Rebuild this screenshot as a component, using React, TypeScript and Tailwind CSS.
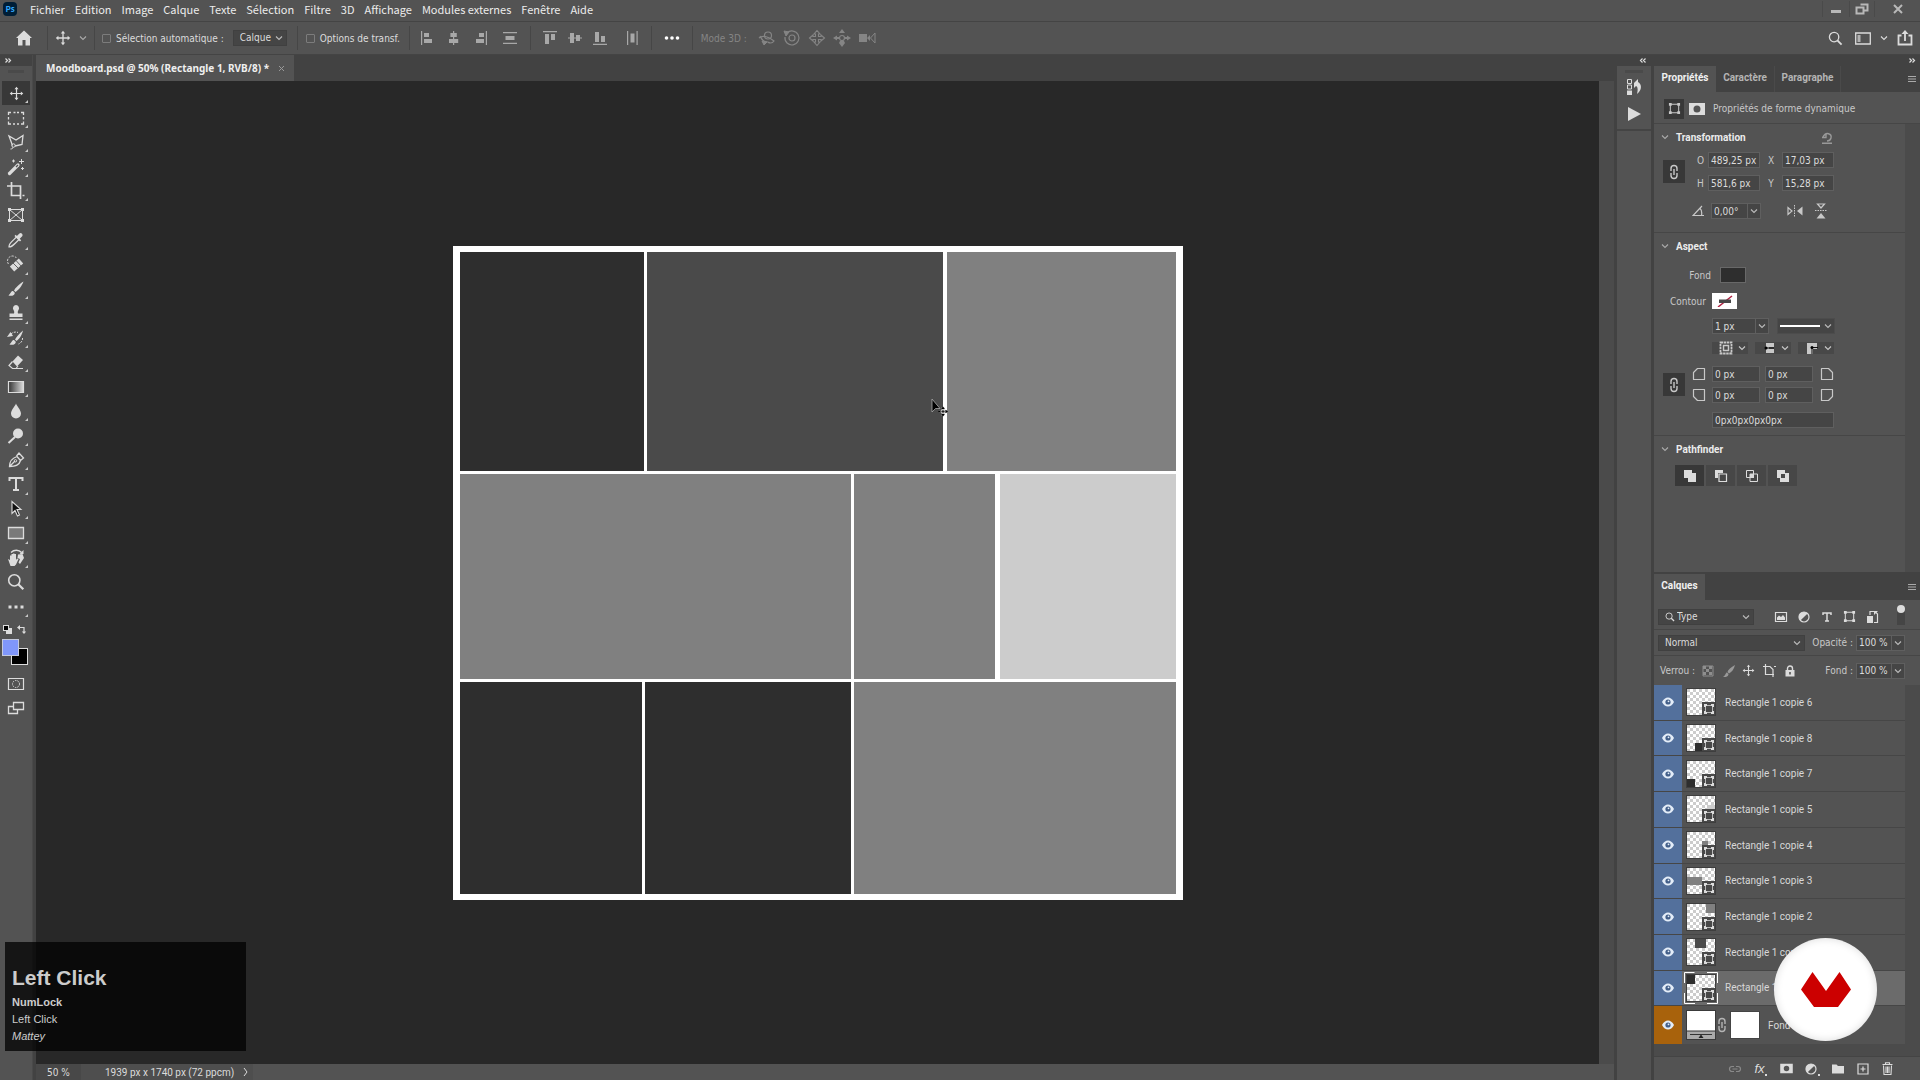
import type { ReactNode } from "react";

const L = "#dcdcdc";

function Svg({ s = 18, w, children, className = "" }: { s?: number; w?: number; children: ReactNode; className?: string }) {
  return (
    <svg width={w ?? s} height={s} viewBox={`0 0 ${w ?? s} ${s}`} fill="none" stroke="currentColor" className={`shrink-0 ${className}`} aria-hidden="true">
      {children}
    </svg>
  );
}

const Chevron = ({ className = "" }: { className?: string }) => (
  <Svg s={8} className={className}>
    <path d="M1 2.5 4 5.5 7 2.5" strokeWidth="1.1" />
  </Svg>
);

const MoveIcon = ({ s = 16 }: { s?: number }) => (
  <svg width={s} height={s} viewBox="0 0 16 16" fill="currentColor" stroke="currentColor" className="shrink-0" aria-hidden="true">
    <path d="M8 2v12M2 8h12" strokeWidth="1.3" />
    <path d="M8 .8 10.2 3.4H5.8zM8 15.2l2.2-2.6H5.8zM.8 8l2.6-2.2v4.4zM15.2 8l-2.6-2.2v4.4z" stroke="none" />
  </svg>
);

const ShapeIcon = ({ s = 14 }: { s?: number }) => (
  <svg width={s} height={s} viewBox="0 0 14 14" fill="none" stroke="currentColor" className="shrink-0" aria-hidden="true">
    <path d="M2.5 2.5h9v9h-9z" strokeWidth="1.1" />
    <path d="M1 1h3v3H1zM10 1h3v3h-3zM1 10h3v3H1zM10 10h3v3h-3z" fill="currentColor" stroke="none" />
  </svg>
);

const LinkIcon = () => (
  <Svg s={16} w={10}>
    <path d="M2 7V4.500a3 3 0 0 1 6 0V7M2 9v2.500a3 3 0 0 0 6 0V9M5 5v6" strokeWidth="1.4" />
  </Svg>
);

const MaskIcon = ({ s = 14 }: { s?: number }) => (
  <svg width={s + 2} height={s} viewBox="0 0 16 14" className="shrink-0" aria-hidden="true">
    <path fill="currentColor" fillRule="evenodd" d="M0 1h16v12H0zM8 3.500a3.500 3.500 0 1 0 0 7a3.500 3.500 0 0 0 0-7" />
  </svg>
);

const SearchIcon = ({ s = 16 }: { s?: number }) => (
  <svg width={s} height={s} viewBox="0 0 16 16" fill="none" stroke="currentColor" className="shrink-0" aria-hidden="true">
    <circle cx="6.500" cy="6.500" r="5" strokeWidth="1.4" />
    <path d="m10 10 4.500 4.500" strokeWidth="2" />
  </svg>
);

const AdjustIcon = () => (
  <Svg s={14}>
    <circle cx="7" cy="7" r="5" strokeWidth="1.2" />
    <path d="M10.600 3.400A5 5 0 0 0 3.400 10.600z" fill="currentColor" stroke="none" />
  </Svg>
);

const tools: { name: string; icon: ReactNode; active?: boolean; plain?: boolean }[] = [
  { name: "Déplacement", active: true, icon: <MoveIcon s={15} /> },
  { name: "Rectangle de sélection", icon: <Svg><path d="M1.500 6V3.500H4M6.500 3.500h2M10 3.500h2M14 3.500h2.500V6M16.500 8v2.500M16.500 12.500V15H14M12 15h-2M8 15H6M4 15H1.500v-2.500M1.500 10.500V8" strokeWidth="1.3" /></Svg> },
  { name: "Lasso polygonal", icon: <Svg><path d="M5.500 12.500 2 3l7 4 7-4.500-1 9-7 1.500" strokeWidth="1.300" /><circle cx="6.500" cy="12.500" r="1.700" /><path d="M6 14c0 1.500-1 2-2.500 2" /></Svg> },
  { name: "Baguette magique", icon: <Svg><path d="M2.500 15.500 11 7" strokeWidth="3.200" strokeLinecap="round" /><path d="m9 9 2-2" stroke="#535353" strokeWidth="1.200" /><path d="M14.500 1v5M12 3.500h5M6.500 1.500v3M5 3h3M15.500 9v3M14 10.500h3" /></Svg> },
  { name: "Recadrage", icon: <Svg><path d="M4.500 0v13.500H14M0 4h13.500v13M15.500 13.500h2" strokeWidth="1.700" /></Svg> },
  { name: "Image", plain: true, icon: <Svg><path d="M2.500 3.500h13v11h-13zM2.500 3.500l13 11M15.500 3.500l-13 11" /><path d="M1 2h3v3H1zM14 2h3v3h-3zM1 13h3v3H1zM14 13h3v3h-3z" fill="currentColor" stroke="none" /></Svg> },
  { name: "Pipette", icon: <Svg><path d="M2 16c0-3 1-3.500 7.500-10L12 8.500C6 14.500 5 16 2 16z" strokeWidth="1.200" /><path d="m7.500 5 5.500 5.500 1.200-1.200-1.500-1.500 2.500-2.500a2 2 0 0 0-2.800-2.800L9.900 5 8.700 3.800z" fill="currentColor" stroke="none" /></Svg> },
  { name: "Correcteur", icon: <Svg><path d="M1.500 9a5 5 0 0 1 8-6" strokeDasharray="2 1.300" /><path d="M5 14 14 6" strokeWidth="6.500" /><path d="m6 8 6 6M9 5.500l6 6.500" stroke="#535353" strokeWidth=".9" /></Svg> },
  { name: "Pinceau", icon: <Svg><path d="M16.500 1.500C12 4 8 8.500 7 10.500L8.500 12C11 10.500 15 6 16.500 1.500zM6 11c-2 0-2 2-4.500 4.500C5 16.500 8 15 7.800 12.700z" fill="currentColor" stroke="none" /></Svg> },
  { name: "Tampon", icon: <Svg><path d="M9 1a3.200 3.200 0 0 1 2.500 5c-1 1.500-.8 2.500-.5 3.500h4.500V13h-13V9.500H7c.3-1 .5-2-.5-3.500A3.200 3.200 0 0 1 9 1zM2.500 14.500h13V16h-13z" fill="currentColor" stroke="none" /></Svg> },
  { name: "Forme d'historique", icon: <Svg><path d="M16 1.500C12 4.500 9 8.500 8 10.500L9.500 12C12 10.500 15 6 16 1.500zM7 11c-2 0-2 2-4.500 4.500C6 16.500 9 15 8.800 12.700zM0 8l3.500-5L6 7z" fill="currentColor" stroke="none" /><path d="M4 5c2-2 5-2.500 7-1.500M15.500 9a6 6 0 0 1-4 6" strokeDasharray="2 1.200" /></Svg> },
  { name: "Gomme", icon: <Svg><path d="m5.500 8.500 5.500-6 5 4.500-6 6.500z" fill="currentColor" stroke="none" /><path d="M5.500 8.500 2 12.500l3.500 3H9l2-2.500M8 15.500h8" strokeWidth="1.200" /></Svg> },
  { name: "Dégradé", icon: <Svg><defs><linearGradient id="tool-gradient"><stop stopColor="#333" /><stop offset="1" stopColor="#ddd" /></linearGradient></defs><path d="M1.500 3.500h15v11h-15z" fill="url(#tool-gradient)" strokeWidth="1.200" /></Svg> },
  { name: "Goutte d'eau", icon: <Svg><path d="M9 1.500c1 3 5 6.500 5 10a5 5 0 0 1-10 0c0-3.500 4-7 5-10z" fill="currentColor" stroke="none" /></Svg> },
  { name: "Densité", icon: <Svg><circle cx="11" cy="6.500" r="5" fill="currentColor" stroke="none" /><path d="M8 10 1.500 16" strokeWidth="2" /></Svg> },
  { name: "Plume", icon: <Svg><path d="M2.500 15.500c0-6 3-8.500 7.500-10l3.500 4c-1 4-5 6-11 6zM3 15l5-5M9.500 5l2.500-3 4.500 5-3 2.500" strokeWidth="1.300" /><circle cx="8.500" cy="9.800" r="1.200" /></Svg> },
  { name: "Texte", icon: <Svg><path d="M2.500 6V3h13v3M9 3v12M6 15h6" strokeWidth="2" /></Svg> },
  { name: "Sélection de tracé", icon: <Svg><path d="M5 1.500v12l3-3 2.500 5.500 2-1-2.500-5.500h4z" fill="#111" strokeWidth="1.100" /></Svg> },
  { name: "Rectangle", icon: <Svg><path d="M1.500 3.500h15v11h-15z" fill="#7a7a7a" strokeWidth="1.300" /></Svg> },
  { name: "Main", icon: <Svg><path d="M1 10l2 1V6.500h1.500V5H6v-.5h1.500V5H9v6l1-1.500 1.500.5L9 15.500 7.500 17h-4zM11 5.500l4.500-.5 1.500 4-4 6-1.500-1.500L13 10l-2.500-1z" fill="currentColor" stroke="none" /><path d="M4 3.500C7 .5 12 .5 14.500 3.500" strokeWidth="1.400" /><path d="M16.500 1v4h-4z" fill="currentColor" stroke="none" /></Svg> },
  { name: "Zoom", plain: true, icon: <SearchIcon s={18} /> },
  { name: "Modifier la barre d'outils", icon: <Svg><path d="M1.500 7.500h3v3h-3zM7.500 7.500h3v3h-3zM13.500 7.500h3v3h-3z" fill="currentColor" stroke="none" /></Svg> },
];

function ToolBar() {
  return (
    <aside className="flex w-[33px] shrink-0 flex-col border-r border-[#4a4a4a] bg-[#535353] text-[#dcdcdc]" aria-label="Outils">
      <div className="h-[11px] bg-[#424242] pl-1"><DoubleArrow /></div>
      <div className="mx-auto mt-1 h-[3px] w-4 bg-[#4a4a4a]" />
      <div className="mt-2 flex h-[538px] flex-col">
        {tools.map((t) => (
          <button key={t.name} aria-label={t.name} className={`relative mx-0.5 flex min-h-0 flex-1 items-center justify-center ${t.active ? "bg-[#383838]" : ""}`}>
            {t.icon}
            {!t.plain && <span className="absolute right-0.5 bottom-0.5 border-b-[3px] border-l-[3px] border-b-[#c8c8c8] border-l-transparent" />}
          </button>
        ))}
      </div>
      <div className="mt-0.5 flex h-4 items-center justify-around pr-1">
        <svg width="9" height="9" aria-hidden="true"><rect x="3" y="3" width="6" height="6" fill={L} /><rect x=".5" y=".5" width="5" height="5" fill="#000" stroke={L} /></svg>
        <Svg s={9}><path d="M2 2.500h5V8" strokeWidth="1.200" /><path d="M0 2.500 3 0v5zM7 9 4.800 6.500h4.400z" fill="currentColor" stroke="none" /></Svg>
      </div>
      <div className="mt-0.5 ml-0.5 h-7 w-7">
        <button aria-label="Couleur d'arrière-plan" className="mt-[9px] ml-[9px] block h-[17px] w-[17px] border border-[#dcdcdc] bg-black" />
        <button aria-label="Couleur de premier plan" className="relative -top-[26px] block h-[17px] w-[17px] border border-[#c4c9dc] bg-[#8097fb]" />
      </div>
      <button aria-label="Mode masque" className="mt-2 flex justify-center"><Svg><path d="M1.500 3.500h15v11h-15z" strokeWidth="1.200" /><circle cx="9" cy="9" r="3.500" strokeDasharray="1.500 1" /></Svg></button>
      <button aria-label="Mode d'écran" className="mt-1.5 flex justify-center"><Svg><path d="M6.500 3.500h10v7h-10z" strokeWidth="1.300" /><path d="M6 7.500H1.500v7h9v-4" strokeWidth="1.300" /></Svg></button>
    </aside>
  );
}

const DoubleArrow = ({ left = false }: { left?: boolean }) => (
  <Svg s={11} w={8}>
    <path d={left ? "M3.500 3.500 1.500 5.500 3.500 7.500M6.500 3.500 4.500 5.500 6.500 7.500" : "M1.500 3.500 3.500 5.500 1.500 7.500M4.500 3.500 6.500 5.500 4.500 7.500"} stroke={L} strokeWidth="1.200" />
  </Svg>
);

const menus = ["Fichier", "Edition", "Image", "Calque", "Texte", "Sélection", "Filtre", "3D", "Affichage", "Modules externes", "Fenêtre", "Aide"];

function MenuBar() {
  return (
    <header className="flex h-[22px] shrink-0 items-center border-b border-[#444] bg-[#535353] pb-[3px] pl-[3px] font-['Noto_Sans_CJK_SC',sans-serif] text-[11px] text-[#ececec]">
      <div className="flex h-3.5 w-3.5 items-center justify-center rounded-sm bg-[#001e36] text-[8px] font-bold text-[#31a8ff]">Ps</div>
      <nav className="ml-[13px] flex gap-2.5">
        {menus.map((m) => <button key={m} className="leading-4">{m}</button>)}
      </nav>
      <div className="ml-auto flex h-full items-center text-[#b8b8b8]">
        <button aria-label="Réduire" className="flex h-4 w-[27px] items-center justify-center border-l border-[#4a4a4a]"><span className="mt-1 h-[3px] w-2.5 bg-current" /></button>
        <button aria-label="Restaurer" className="flex h-4 w-[25px] items-center justify-center border-l border-[#4a4a4a]"><Svg s={12} w={14}><path d="M5.500 1.500h7v6h-3M1.500 4.500h7v6h-7z" strokeWidth="2" /></Svg></button>
        <button aria-label="Fermer" className="flex h-4 w-[46px] items-center justify-center border-l border-[#4a4a4a]"><Svg s={10}><path d="m1 1 8 8M9 1 1 9" strokeWidth="2" /></Svg></button>
      </div>
    </header>
  );
}

const Sep = () => <span className="h-6 w-px shrink-0 bg-[#464646]" />;

const alignH = [
  { n: "Aligner à gauche", d: "M1 2h1.200v14H1zM4 4h5v4H4zM4 10h8v4H4z" },
  { n: "Centrer horizontalement", d: "M5.400 4h2.600V2h1.200v2h2.600v4H9.200v2h4v4h-4v2H8v-2H4v-4h4V8H5.400z" },
  { n: "Aligner à droite", d: "M15.800 2H17v14h-1.200zM9 4h5v4H9zM6 10h8v4H6z" },
];
const alignV = [
  { n: "Aligner en haut", d: "M2 2h14v1.200H2zM4 5h4v10H4zM10 5h4v6h-4z" },
  { n: "Centrer verticalement", d: "M4 4h4v4.400h2V6h4v2.400h2v1.200h-2V12h-4V9.600H8V14H4V9.600H2V8.400h2z" },
  { n: "Aligner en bas", d: "M2 14.800h14V16H2zM4 3h4v10H4zM10 7h4v6h-4z" },
];

function AlignGroup({ items }: { items: { n: string; d: string }[] }) {
  return (
    <>
      {items.map((i) => (
        <button key={i.n} aria-label={i.n} className="flex w-[25px] justify-center">
          <Svg><path d={i.d} fill="currentColor" stroke="none" /></Svg>
        </button>
      ))}
    </>
  );
}

const modes3d = [
  { n: "Orbite 3D", i: <Svg><path d="M1 9c3-3 9-2 15 3-2 3-5 2-6 1M2 7c2 5 6 6 8 6" strokeWidth="1.200" /><circle cx="10" cy="6.500" r="3.500" strokeWidth="1.200" /><path d="m4 12 5 1-3 3z" fill="currentColor" /></Svg> },
  { n: "Roulement 3D", i: <Svg><circle cx="9" cy="9" r="3" strokeWidth="1.200" /><path d="M4 4a7 7 0 1 1-2 4" strokeWidth="1.200" /><path d="m1 2 5 1-3 4z" fill="currentColor" /></Svg> },
  { n: "Panoramique 3D", i: <Svg><path d="M7.500 7.500V5H6l3-3.500L12 5h-1.500v2.500H13V6l3.500 3-3.500 3v-1.500h-2.500V13H12l-3 3.500L6 13h1.500v-2.500H5V12L1.500 9 5 6v1.500z" strokeWidth="1.100" /></Svg> },
  { n: "Glissement 3D", i: <Svg><circle cx="9" cy="9" r="2.500" strokeWidth="1.200" /><path d="M9 0l3 4H6zM9 18l3-4-1-2H7l-1 2zM0 9l4-2.500v1.500h2v2H4v1.500zM18 9l-4-2.500V8h-2v2h2v1.500z" fill="currentColor" stroke="none" /></Svg> },
  { n: "Caméra 3D", i: <Svg><path d="M1 5h8v8H1zM9 9l3-3v6z" fill="currentColor" stroke="none" /><path d="M17 4l-4.500 5 4.500 5z" /></Svg> },
];

function OptionsBar() {
  return (
    <div className="flex h-8 shrink-0 items-center bg-[#535353] text-[10px] text-[#dcdcdc]">
      <button aria-label="Accueil" className="ml-3 flex w-6 justify-center">
        <Svg s={16}><path d="M8 .5 0 8h2v7.500h4.500V10h3v5.500H14V8h2z" fill="currentColor" stroke="none" /></Svg>
      </button>
      <span className="w-[11px]" /><Sep />
      <button aria-label="Outil Déplacement" className="ml-[7px] flex items-center gap-2 text-[#dcdcdc]"><MoveIcon s={16} /><Chevron className="text-[#aaa]" /></button>
      <span className="w-[7px]" /><Sep />
      <label className="ml-[7px] flex items-center gap-[5px] whitespace-nowrap"><input type="checkbox" className="h-[9px] w-[9px] appearance-none rounded-[1px] border border-[#7c7c7c]" />Sélection automatique :</label>
      <div className="ml-[9px] w-[54px]"><Select label="Sélection automatique" value="Calque" /></div>
      <span className="w-2.5" /><Sep />
      <label className="ml-2 flex items-center gap-[5px] whitespace-nowrap"><input type="checkbox" className="h-[9px] w-[9px] appearance-none rounded-[1px] border border-[#7c7c7c]" />Options de transf.</label>
      <span className="w-[9px]" /><Sep />
      <div className="ml-[7px] flex items-center text-[#a8a8a8]">
        <AlignGroup items={alignH} />
        <button aria-label="Répartir verticalement" className="ml-[6px] flex w-6 justify-center"><Svg><path d="M2 3h14v1.300H2zM4.500 7h9v4h-9zM2 13.700h14V15H2z" fill="currentColor" stroke="none" /></Svg></button>
        <span className="w-[8px]" /><Sep /><span className="w-[7px]" />
        <AlignGroup items={alignV} />
        <button aria-label="Répartir horizontalement" className="ml-[7px] flex w-6 justify-center"><Svg><path d="M4 2h1.200v14H4zM7.500 4.500h4v9h-4zM13.500 2h1.200v14h-1.200z" fill="currentColor" stroke="none" /></Svg></button>
      </div>
      <span className="w-[7px]" /><Sep />
      <button aria-label="Plus d'options" className="mx-[11px] flex w-[18px] justify-center text-white"><Svg s={8} w={16}><g fill="currentColor" stroke="none"><circle cx="2.500" cy="4" r="1.800" /><circle cx="8" cy="4" r="1.800" /><circle cx="13.500" cy="4" r="1.800" /></g></Svg></button>
      <Sep />
      <div className="ml-2 flex items-center text-[#858585]">
        <span className="w-[54px]">Mode 3D :</span>
        {modes3d.map((m) => <button key={m.n} aria-label={m.n} className="flex w-[25px] justify-center">{m.i}</button>)}
      </div>
      <div className="ml-auto flex items-center pr-[7px]">
        <button aria-label="Rechercher"><SearchIcon s={15} /></button>
        <button aria-label="Espace de travail" className="ml-3 flex items-center gap-[9px]"><Svg s={13} w={16}><path d="M.7 1h14.600v11H.7z" strokeWidth="1.300" /><path d="M2.500 3h3v7h-3z" fill="currentColor" stroke="none" opacity=".7" /></Svg><Chevron /></button>
        <button aria-label="Partager" className="ml-[9px]"><Svg s={16}><path d="M4.500 5.500h-3v9h13v-9h-3M8 11V2" strokeWidth="1.800" /><path d="M8 0l3.500 4h-7z" fill="currentColor" stroke="none" /></Svg></button>
      </div>
    </div>
  );
}

function Select({ label, value, inset = "pl-1.5" }: { label: string; value: string; inset?: string }) {
  return (
    <div className="relative flex w-full items-center">
      <select aria-label={label} defaultValue={value} className={`h-4 w-full appearance-none border border-[#404040] bg-[#454545] text-[10px] leading-none text-[#dcdcdc] ${inset}`}>
        <option>{value}</option>
      </select>
      <Chevron className="pointer-events-none absolute right-1 text-[#bbb]" />
    </div>
  );
}

function Board() {
  return (
    <div className="relative flex h-[654px] w-[730px] shrink-0 flex-col gap-[3px] bg-white pt-1.5 pr-[7px] pb-1.5 pl-[7px]">
      <div className="flex flex-[219_1_0]">
        <div className="flex-[184_1_0] bg-[#2e2e2e]" />
        <div className="ml-[3px] flex-[296_1_0] bg-[#4a4a4a]" />
        <div className="ml-1 flex-[229_1_0] bg-[#808080]" />
      </div>
      <div className="flex flex-[205_1_0]">
        <div className="flex-[391_1_0] bg-[#808080]" />
        <div className="ml-[3px] flex-[141_1_0] bg-[#808080]" />
        <div className="ml-[5px] flex-[176_1_0] bg-[#cccccc]" />
      </div>
      <div className="flex flex-[212_1_0] gap-[3px]">
        <div className="flex-[182_1_0] bg-[#2e2e2e]" />
        <div className="flex-[206_1_0] bg-[#2e2e2e]" />
        <div className="flex-[322_1_0] bg-[#808080]" />
      </div>
      <svg width="18" height="20" viewBox="0 0 18 20" className="absolute top-[152px] left-[478px]" aria-hidden="true">
        <path d="M1 1v13l3.500-3.500H9z" fill="#000" stroke="#aaa" strokeWidth=".8" />
        <path d="M12 9.500v8M8 13.500h8" stroke="#bbb" strokeWidth="3" />
        <path d="m12 8.500 1.800 2.500h-3.600zM12 18.500l1.800-2.500h-3.600zM7 13.500l2.500-1.800v3.600zM17 13.500l-2.500-1.800v3.600z" fill="#000" />
        <path d="M12 12v3M10.500 13.500h3" stroke="#222" />
      </svg>
    </div>
  );
}

function DocumentArea() {
  return (
    <main className="flex min-w-0 flex-1 flex-col bg-[#424242] pl-[3px]">
      <div className="flex h-[26px] shrink-0">
        <div className="flex w-[258px] items-center gap-[9px] bg-[#535353] pl-2.5 text-[#efefef]">
          <span className="font-['Noto_Sans',sans-serif] text-[10px] font-bold whitespace-nowrap">Moodboard.psd @ 50% (Rectangle 1, RVB/8) *</span>
          <button aria-label="Fermer le document" className="text-[#999]"><Svg s={7}><path d="m1 1 5 5M6 1 1 6" /></Svg></button>
        </div>
      </div>
      <div className="flex min-h-0 flex-1">
        <div className="flex min-w-0 flex-1 items-center justify-center overflow-hidden bg-[#282828]"><Board /></div>
        <div className="w-[15px] shrink-0 bg-[#4b4b4b]" />
      </div>
      <footer className="flex h-4 shrink-0 items-center bg-[#535353] text-[10px] text-[#dcdcdc]">
        <div className="flex h-full w-[45px] items-center bg-[#484848] pl-[11px]">50 %</div>
        <div className="flex h-full w-[172px] items-center justify-between bg-[#4e4e4e] pr-[5px] pl-6 font-['Roboto',sans-serif]">
          1939 px x 1740 px (72 ppcm)
          <Svg s={10} w={5}><path d="m1 1 3 4-3 4" /></Svg>
        </div>
      </footer>
    </main>
  );
}

function Dock() {
  return (
    <aside className="flex w-[40px] shrink-0 flex-col border-x-[3px] border-[#424242] bg-[#535353] text-[#dcdcdc]" aria-label="Panneaux réduits">
      <div className="flex h-[11px] justify-end bg-[#424242] pr-1"><DoubleArrow left /></div>
      <div className="flex h-[65px] flex-col items-center border-b-2 border-[#444]">
        <div className="mt-1 h-[3px] w-[18px] bg-[#4a4a4a]" />
        <button aria-label="Historique" className="mt-[5px]"><Svg s={18} w={16}><path d="M1.500 1.500h4v4h-4zM1.500 7h4v4h-4z" /><path d="M1 12.500h5v4.500H1zM8 5l4-4v3c5 3 3 9-1 12 1-4 1-7-1-8l-2 2z" fill="currentColor" stroke="none" /></Svg></button>
        <button aria-label="Scripts" className="mt-[11px]"><Svg s={14}><path d="M1 0v14l13-7z" fill="currentColor" stroke="none" /></Svg></button>
      </div>
    </aside>
  );
}

function Field({ label, value, className = "w-[52px]" }: { label: string; value: string; className?: string }) {
  return <input aria-label={label} defaultValue={value} className={`h-4 min-w-0 border border-[#5f5f5f] bg-[#454545] pl-0.5 text-[10px] text-[#dcdcdc] ${className}`} />;
}

const DropButton = ({ label }: { label: string }) => (
  <button aria-label={label} className="-ml-px flex h-4 w-[14px] items-center justify-center border border-[#5f5f5f] bg-[#454545] text-[#bbb]"><Chevron /></button>
);

const SectionTitle = ({ children, action }: { children: ReactNode; action?: ReactNode }) => (
  <div className="flex h-[26px] items-center font-['Roboto',sans-serif] text-[10px] font-bold text-[#ececec]">
    <span className="flex w-[22px] justify-center text-[#aaa]"><Chevron /></span>
    <h2>{children}</h2>
    {action}
  </div>
);

const LinkButton = ({ label }: { label: string }) => (
  <button aria-label={label} className="flex h-[23px] w-[22px] shrink-0 items-center justify-center bg-[#383838]"><LinkIcon /></button>
);

const corners = [
  "M1.500 12.500v-7l4-4h7v11z",
  "M1.500 12.500v-11h7l4 4v7z",
  "M1.500 1.500v7l4 4h7v-11z",
  "M1.500 1.500v11h7l4-4v-7z",
];
const Corner = ({ i }: { i: number }) => <Svg s={14}><path d={corners[i]} strokeLinejoin="round" strokeWidth="1.200" /></Svg>;

const pathfinders = [
  { n: "Combiner", i: <path d="M1 1h8v3h4v9H5V9H1z" fill="currentColor" stroke="none" /> },
  { n: "Soustraire", i: <><path d="M1 1h8v3H4v5H1z" fill="currentColor" stroke="none" /><path d="M5 5h7.500v7.500H5z" strokeWidth="1.200" /></> },
  { n: "Intersection", i: <><path d="M1.500 1.500h7v7h-7zM5 5h7.500v7.500H5z" /><path d="M5 5h4v4H5z" fill="currentColor" stroke="none" /></> },
  { n: "Exclure", i: <path d="M1 1h8v3h4v9H4V9H1zM5 5v4h4V5z" fill="currentColor" fillRule="evenodd" stroke="none" /> },
];

function PropertiesPanel() {
  return (
    <section className="flex h-[506px] shrink-0 flex-col" aria-label="Propriétés">
      <div className="flex h-[26px] shrink-0 items-center bg-[#424242] font-['Roboto',sans-serif] text-[10px] font-bold">
        <button className="h-full w-[62px] bg-[#535353] pb-[3px] text-[#f0f0f0]">Propriétés</button>
        <button className="h-full w-[59px] border-r border-[#4a4a4a] pb-[3px] text-[#b4b4b4]">Caractère</button>
        <button className="h-full w-[66px] border-r border-[#4a4a4a] pb-[3px] text-[#b4b4b4]">Paragraphe</button>
        <PanelMenu />
      </div>
      <div className="flex h-8 shrink-0 items-center border-b border-[#464646] pt-0.5 pl-2.5 text-[10px] text-[#c8c8c8]">
        <span className="flex h-5 w-5 items-center justify-center bg-[#383838]"><ShapeIcon s={13} /></span>
        <span className="mr-2 ml-[5px] text-[#dcdcdc]"><MaskIcon /></span>
        Propriétés de forme dynamique
      </div>
      <div className="flex min-h-0 flex-1 text-[10px] text-[#c8c8c8]">
        <div className="min-w-0 flex-1">
          <div className="h-[109px] border-b border-[#464646]">
            <SectionTitle action={<button aria-label="Réinitialiser" className="ml-auto pr-[72px] text-[#999]"><Svg s={13}><path d="M2 6.500h4v-4M3 6C6 0 12 3 11 7c-.5 2-2 3-4 3M2 12.200h10" strokeWidth="1.400" /></Svg></button>}>Transformation</SectionTitle>
            <div className="mt-0.5 flex items-center pl-[9px]">
              <LinkButton label="Lier la largeur et la hauteur" />
              <div className="ml-2 grid grid-cols-[15px_52px_22px_52px] items-center gap-y-[7px] text-center">
                <span>O</span><Field label="Largeur" value="489,25 px" /><span>X</span><Field label="X" value="17,03 px" />
                <span>H</span><Field label="Hauteur" value="581,6 px" /><span>Y</span><Field label="Y" value="15,28 px" />
              </div>
            </div>
            <div className="mt-3 flex items-center pl-[38px]">
              <Svg s={12} w={13}><path d="M12 10.500H1L10 1M8 3.500c2 1.500 2 4 1.500 7" strokeWidth="1.200" /></Svg>
              <Field label="Angle" value="0,00°" className="ml-1.5 w-[37px]" />
              <DropButton label="Choisir un angle" />
              <button aria-label="Symétrie horizontale" className="ml-[26px]"><Svg s={14} w={16}><path d="M1 3.500v7L5 7z" strokeWidth="1.200" /><path d="M15.500 2.500v9L10 7z" fill="currentColor" stroke="none" /><path d="M7.500 1v12" strokeDasharray="1.500 1" /></Svg></button>
              <button aria-label="Symétrie verticale" className="ml-[11px]"><Svg s={16} w={14}><path d="M3.500 1h7L7 5z" strokeWidth="1.200" /><path d="M2.500 15.500h9L7 10z" fill="currentColor" stroke="none" /><path d="M1 7.500h12" strokeDasharray="1.500 1" /></Svg></button>
            </div>
          </div>
          <div className="h-[203px] border-b border-[#464646]">
            <SectionTitle>Aspect</SectionTitle>
            <div className="mt-0.5 flex h-7 items-center"><span className="w-[57px] text-right">Fond</span><button aria-label="Couleur de fond" className="ml-[9px] h-4 w-[26px] border border-[#686868] bg-[#2e2e2e]" /></div>
            <div className="flex h-6 items-center"><span className="w-[52px] text-right">Contour</span>
              <button aria-label="Couleur de contour" className="ml-1.5 flex h-4 w-[25px] items-center justify-center bg-white"><svg width="18" height="12" aria-hidden="true"><path d="M2 12 16 1" stroke="#b02040" strokeWidth="1.500" /><path d="M3 4.500h12v3.500H3z" fill="#484848" /></svg></button>
            </div>
            <div className="mt-[5px] flex pl-[58px]">
              <Field label="Épaisseur du contour" value="1 px" className="w-11" />
              <DropButton label="Choisir l'épaisseur" />
              <button aria-label="Type de contour" className="ml-2 flex h-4 w-[58px] items-center gap-1 border border-[#4c4c4c] bg-[#454545] px-0.5"><span className="h-0.5 w-[42px] bg-white" /><Chevron className="text-[#bbb]" /></button>
            </div>
            <div className="mt-[8px] flex gap-[7px] pl-[58px]">
              <button aria-label="Alignement du contour" className="flex h-3 w-9 items-center justify-between bg-[#484848] pr-0.5 pl-[7px]"><Svg s={14}><path d="M1.500 1.500h11v11h-11z" strokeWidth="1.800" strokeDasharray="2.500 .6" /><path d="M4.500 4.500h5v5h-5z" strokeWidth="1.500" /></Svg><Chevron /></button>
              <button aria-label="Extrémités" className="flex h-3 w-9 items-center justify-between bg-[#484848] pr-0.5 pl-2"><Svg s={12}><path d="M3 1h8v4H6v2h5v4H3z" fill="currentColor" stroke="none" /><path d="M2 6h9" stroke="#111" /><circle cx="3" cy="6" r="1.500" fill="#000" stroke="none" /></Svg><Chevron /></button>
              <button aria-label="Angles" className="flex h-3 w-9 items-center justify-between bg-[#484848] pr-0.5 pl-2"><Svg s={12}><path d="M1 1h10v6H7v5H1z" fill="currentColor" stroke="none" /><path d="M6 12V5.500h6" stroke="#111" /><circle cx="6" cy="5.500" r="1.500" fill="#000" stroke="none" /></Svg><Chevron /></button>
            </div>
            <div className="mt-3 flex items-center pl-[9px]">
              <LinkButton label="Lier les rayons d'angle" />
              <div className="ml-[7px] grid grid-cols-[20px_53px_55px_14px] items-center gap-y-[5px]">
                <Corner i={0} /><Field label="Rayon supérieur gauche" value="0 px" className="w-12" /><Field label="Rayon supérieur droit" value="0 px" className="w-12" /><Corner i={1} />
                <Corner i={2} /><Field label="Rayon inférieur gauche" value="0 px" className="w-12" /><Field label="Rayon inférieur droit" value="0 px" className="w-12" /><Corner i={3} />
              </div>
            </div>
            <div className="mt-[9px] pl-[58px]"><Field label="Rayons" value="0px0px0px0px" className="w-[122px]" /></div>
          </div>
          <SectionTitle>Pathfinder</SectionTitle>
          <div className="mt-[3px] flex gap-0.5 pl-[21px] text-[#dcdcdc]">
            {pathfinders.map((p, i) => (
              <button key={p.n} aria-label={p.n} className={`flex h-[21px] w-[29px] items-center justify-center ${i === 0 ? "bg-[#383838]" : "bg-[#474747]"}`}><Svg s={14}>{p.i}</Svg></button>
            ))}
          </div>
        </div>
        <div className="w-[15px] shrink-0 bg-[#4b4b4b]" />
      </div>
    </section>
  );
}

const PanelMenu = () => (
  <button aria-label="Menu du panneau" className="ml-auto pr-1 text-[#aaa]"><Svg s={8}><path d="M0 1.500h8M0 4h8M0 6.500h8" /></Svg></button>
);

type Block = { x: number; y: number; w: number; h: number; c: string };
const layers: { name: string; block?: Block; selected?: boolean }[] = [
  { name: "Rectangle 1 copie 6" },
  { name: "Rectangle 1 copie 8", block: { x: 8, y: 18, w: 8, h: 8, c: "#2e2e2e" } },
  { name: "Rectangle 1 copie 7", block: { x: 0, y: 18, w: 8, h: 8, c: "#2e2e2e" } },
  { name: "Rectangle 1 copie 5", block: { x: 20, y: 9, w: 8, h: 6, c: "#cccccc" } },
  { name: "Rectangle 1 copie 4", block: { x: 15, y: 9, w: 6, h: 6, c: "#808080" } },
  { name: "Rectangle 1 copie 3", block: { x: 0, y: 9, w: 15, h: 8, c: "#808080" } },
  { name: "Rectangle 1 copie 2", block: { x: 19, y: 0, w: 9, h: 9, c: "#808080" } },
  { name: "Rectangle 1 copie", block: { x: 8, y: 0, w: 11, h: 9, c: "#4a4a4a" } },
  { name: "Rectangle 1", block: { x: 0, y: 0, w: 8, h: 9, c: "#2e2e2e" }, selected: true },
];

function Thumb({ block, id }: { block?: Block; id: string }) {
  return (
    <svg width="28" height="26" viewBox="0 0 28 26" className="shrink-0" aria-hidden="true">
      <defs><pattern id={id} width="6" height="6" patternUnits="userSpaceOnUse"><rect width="6" height="6" fill="#fff" /><path d="M0 0h3v3H0zM3 3h3v3H3z" fill="#ccc" /></pattern></defs>
      <rect width="28" height="26" fill={`url(#${id})`} />
      {block && <rect x={block.x} y={block.y} width={block.w} height={block.h} fill={block.c} />}
      <rect x="15" y="13" width="13" height="13" fill="#484848" />
      <g transform="translate(17 15)"><path d="M1.500 1.500h7v7h-7z" fill="none" stroke="#b8b8b8" /><path d="M0 0h3v2H2v1H0zM7 0h3v3H8V2H7zM0 7h2v1h1v2H0zM8 7h2v3H7V8h1z" fill={L} /></g>
    </svg>
  );
}

const Eye = () => (
  <svg width="12" height="10" viewBox="0 0 12 10" aria-hidden="true"><path d="M0 5c3-6 9-6 12 0-3 6-9 6-12 0z" fill="#e4edf8" /><circle cx="6" cy="5" r="2.600" fill="#44608a" /><circle cx="6.500" cy="4.300" r=".9" fill="#e4edf8" /></svg>
);

function LayersPanel() {
  return (
    <section className="flex min-h-0 flex-1 flex-col border-t-2 border-[#424242] text-[10px] text-[#c8c8c8]" aria-label="Calques">
      <div className="flex h-[26px] shrink-0 items-center bg-[#424242]">
        <button className="h-full w-[51px] bg-[#535353] pb-[3px] font-['Roboto',sans-serif] font-bold text-[#f0f0f0]">Calques</button>
        <PanelMenu />
      </div>
      <div className="flex h-[30px] shrink-0 items-center border-b border-[#464646] pt-1 pr-[15px] pl-1">
        <div className="relative flex w-24 items-center">
          <Select label="Filtrer par" value="Type" inset="pl-[18px]" />
          <span className="pointer-events-none absolute left-[7px] text-[#dcdcdc]"><SearchIcon s={10} /></span>
        </div>
        <div className="ml-[15px] flex items-center text-[#dcdcdc]">
          <button aria-label="Pixels" className="flex w-[23px] justify-center"><Svg s={14}><path d="M1.500 2.500h11v9h-11z" strokeWidth="1.200" /><path d="M3 10V7.500L5 5.500 7 7l2-2 2 2.500V10z" fill="currentColor" stroke="none" /></Svg></button>
          <button aria-label="Réglages" className="flex w-[23px] justify-center"><AdjustIcon /></button>
          <button aria-label="Texte" className="flex w-[23px] justify-center"><Svg s={12}><path d="M2 4V2h8v2M6 2v8M4 10h4" strokeWidth="1.500" /></Svg></button>
          <button aria-label="Formes" className="flex w-[23px] justify-center"><ShapeIcon s={13} /></button>
          <button aria-label="Objets dynamiques" className="flex w-[22px] justify-center"><Svg s={14}><path d="M5 5V1.500h5L12.500 4v8.500H9" strokeWidth="1.200" /><path d="M2 6h6v7H2zM9 1h4L9 5z" fill="currentColor" stroke="none" /></Svg></button>
        </div>
        <button aria-label="Activer le filtrage" className="ml-auto flex h-4 w-2 flex-col items-center bg-[#454545]"><span className="-mt-1 h-2 w-2 rounded-full bg-[#dcdcdc]" /></button>
      </div>
      <div className="flex h-[26px] shrink-0 items-center border-b border-[#464646] pr-[15px] pl-1">
        <div className="w-[147px]"><Select label="Mode de fusion" value="Normal" inset="pl-[6px]" /></div>
        <span className="ml-auto whitespace-nowrap">Opacité :</span>
        <Field label="Opacité" value="100 %" className="ml-[3px] w-9 border-[#4c4c4c] pr-0" />
        <DropButton label="Régler l'opacité" />
      </div>
      <div className="flex h-[29px] shrink-0 items-center pr-[15px] pl-1.5">
        <span className="w-[37px] whitespace-nowrap">Verrou :</span>
        <div className="flex items-center text-[#dcdcdc]">
          <button aria-label="Verrouiller la transparence" className="flex w-[21px] justify-center text-[#8f8f8f]"><Svg s={12}><path d="M1 1h10v10H1z" /><path d="M1 1h3v3H1zM7 1h3v3H7zM4 4h3v3H4zM1 7h3v3H1zM7 7h3v3H7z" fill="currentColor" stroke="none" /></Svg></button>
          <button aria-label="Verrouiller les pixels" className="flex w-[21px] justify-center text-[#999]"><Svg s={12}><path d="M12 0C8 2 5 5 4.500 7L6 8.500C9 7 11 4 12 0zM4 7.500C2.500 7.500 3 10 0 12c3 .5 5.500-.5 5.500-3z" fill="currentColor" stroke="none" /></Svg></button>
          <button aria-label="Verrouiller la position" className="flex w-[19px] justify-center"><MoveIcon s={13} /></button>
          <button aria-label="Verrouiller le plan de travail" className="flex w-[22px] justify-center"><Svg s={13}><path d="M2.500 0v10.500H11M0 2.500h7l3 3V13M11 2.500h2" strokeWidth="1.200" /></Svg></button>
          <button aria-label="Tout verrouiller" className="flex w-[20px] justify-center"><Svg s={12}><path d="M3.500 6V3.500a2.500 2.500 0 0 1 5 0V6" strokeWidth="1.400" /><path fillRule="evenodd" d="M1.500 5h9v6.500h-9zM5.200 7v2.500h1.600V7z" fill="currentColor" stroke="none" /></Svg></button>
        </div>
        <span className="ml-auto whitespace-nowrap">Fond :</span>
        <Field label="Fond" value="100 %" className="ml-[3px] w-9 border-[#4c4c4c] pr-0" />
        <DropButton label="Régler le fond" />
      </div>
      <div className="flex min-h-0 flex-1 bg-[#4b4b4b] pb-3">
        <ul className="mr-[15px] flex min-w-0 flex-1 flex-col bg-[#535353] font-['Roboto',sans-serif] text-[#d8d8d8]">
          {layers.map((l, i) => (
            <li key={l.name} className="flex min-h-0 flex-[36_1_0] items-stretch border-b border-[#464646]">
              <button aria-label={`Visibilité ${l.name}`} className="flex w-7 shrink-0 items-center justify-center bg-[#53709c]"><Eye /></button>
              <div className={`flex min-w-0 flex-1 items-center pl-1 ${l.selected ? "bg-[#6b6b6b]" : ""}`}>
                <div className="relative">
                  <div className="border border-[#3e3e3e]"><Thumb block={l.block} id={`checker-${i}`} /></div>
                  {l.selected && <svg width="34" height="32" viewBox="0 0 34 32" className="absolute -top-0.5 -left-0.5" fill="none" stroke="#fff" aria-hidden="true"><path d="M.5 11V.5h10M23 .5h10.500V11M33.500 21v10.500H23M11 31.500H.5V21" /></svg>}
                </div>
                <span className="ml-[9px] whitespace-nowrap">{l.name}</span>
              </div>
            </li>
          ))}
          <li className="flex min-h-0 flex-[39_1_0] items-stretch">
            <button aria-label="Visibilité Fond" className="flex w-7 shrink-0 items-center justify-center bg-[#a8620c]"><Eye /></button>
            <div className="flex items-center pl-1">
              <svg width="30" height="30" aria-hidden="true"><rect x=".5" y=".5" width="29" height="29" fill="#fff" stroke="#3a3a3a" /><rect x="1" y="21" width="28" height="8" fill="#aaa" /><path d="M1 21h28M4 24.500h22" stroke="#333" /><path d="m15 24.500 2.500 3.500h-5z" fill="#222" /></svg>
              <span className="mx-px text-[#b4b4b4]"><LinkIcon /></span>
              <span className="ml-0.5 h-[28px] w-[30px] border border-[#444] bg-white" />
              <span className="ml-2">Fond 1</span>
            </div>
          </li>
        </ul>
      </div>
      <footer className="flex h-6 shrink-0 items-center justify-end border-t border-[#444] bg-[#535353] pr-5 text-[#dcdcdc]">
        <button aria-label="Lier les calques" className="flex w-[26px] justify-center text-[#8a8a8a]"><Svg s={8} w={14}><path d="M6 1.500H4a2.500 2.500 0 0 0 0 5h2M8 1.500h2a2.500 2.500 0 0 1 0 5H8M4.500 4h5" strokeWidth="1.200" /></Svg></button>
        <button aria-label="Style de calque" className="flex w-[25px] items-end justify-center font-['Liberation_Sans',sans-serif] text-[13px] italic">fx<span className="mb-0.5 h-0.5 w-0.5 bg-current" /></button>
        <button aria-label="Ajouter un masque" className="flex w-[26px] justify-center"><MaskIcon s={11} /></button>
        <button aria-label="Calque de réglage" className="flex w-[26px] items-end justify-center"><AdjustIcon /><span className="h-0.5 w-0.5 bg-current" /></button>
        <button aria-label="Nouveau groupe" className="flex w-[25px] justify-center"><Svg s={12}><path d="M0 1.500h4.500l1.500 1.500h6v7.500H0z" fill="currentColor" stroke="none" /></Svg></button>
        <button aria-label="Nouveau calque" className="flex w-[25px] justify-center"><Svg s={12}><path d="M1 1h10v10H1zM6 3.500v5M3.500 6h5" strokeWidth="1.200" /></Svg></button>
        <button aria-label="Supprimer" className="flex w-[25px] justify-center"><Svg s={13} w={11}><path d="M.5 2.500h10M3.500 2V.7h4V2M1.500 3.500l.5 9h7l.5-9M4 4.500v6.500M5.500 4.500v6.500M7 4.500v6.500" strokeWidth="1.100" /></Svg></button>
      </footer>
    </section>
  );
}

export default function App() {
  return (
    <div className="relative flex h-screen flex-col overflow-hidden bg-[#424242] font-['DejaVu_Sans_Condensed','DejaVu_Sans',sans-serif]">
      <MenuBar />
      <OptionsBar />
      <div className="flex min-h-0 flex-1 border-t border-[#444]">
        <ToolBar />
        <DocumentArea />
        <Dock />
        <aside className="flex w-[266px] shrink-0 flex-col bg-[#535353]">
          <div className="flex h-[11px] shrink-0 justify-end bg-[#424242] pr-1"><DoubleArrow /></div>
          <PropertiesPanel />
          <LayersPanel />
        </aside>
      </div>
      <div className="absolute bottom-[29px] left-[5px] flex h-[109px] w-[241px] flex-col bg-black/75 px-[7px] pt-6 font-['Liberation_Sans',sans-serif] text-[11px] text-[#cccccc]">
        <p className="text-[21px] leading-6 font-bold">Left Click</p>
        <p className="mt-1 leading-4 font-bold">NumLock</p>
        <p className="leading-[18px]">Left Click</p>
        <p className="leading-4 italic">Mattey</p>
      </div>
      <div className="absolute right-[43px] bottom-[39px] flex h-[103px] w-[103px] items-center justify-center rounded-full bg-white shadow-[inset_0_0_8px_rgba(0,0,0,0.15)]">
        <svg width="50" height="36" viewBox="0 0 50 36" aria-hidden="true"><path d="M0 17.500 11.500 0 25 19 38.500 0 50 17.500 37 35H13z" fill="#cc0000" /></svg>
      </div>
    </div>
  );
}
